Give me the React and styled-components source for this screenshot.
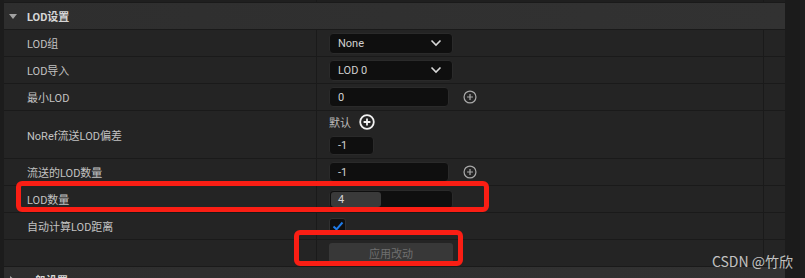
import React from 'react';
import styled, { createGlobalStyle } from 'styled-components';

const GlobalStyle = createGlobalStyle`
  html, body {
    margin: 0;
    padding: 0;
    background: #1b1b1b;
    overflow: hidden;
  }
  * { box-sizing: border-box; }
`;

const Page = styled.div`
  position: relative;
  display: flex;
  width: 805px;
  height: 278px;
  overflow: hidden;
  background: #1b1b1b;
  font-family: Roboto, "Noto Sans CJK SC", sans-serif;
  font-size: 11px;
  color: #c4c4c4;
`;

const LeftEdge = styled.div`
  width: 4px;
  background: #1c1c1c;
`;

const Panel = styled.div`
  width: 781px;
  display: flex;
  flex-direction: column;
`;

const Gutter = styled.div`
  flex: 1;
  display: flex;
  justify-content: flex-end;
  background: #1b1b1b;
  div {
    width: 5px;
    background: #1f1f1f;
  }
`;

const Row = styled.div`
  display: grid;
  grid-template-columns: 313px 447px 1fr;
  height: ${p => p.$h || 27}px;
  flex-shrink: 0;
  background: ${p => p.$dim ? '#1f1f1f' : '#242424'};
  border-bottom: 1px solid #1a1a1a;
`;

const NameCell = styled.div`
  display: flex;
  align-items: center;
  padding-left: 23px;
  border-right: 1px solid #1a1a1a;
`;

const ValueCell = styled.div`
  display: flex;
  flex-direction: ${p => p.$stack ? 'column' : 'row'};
  align-items: ${p => p.$stack ? 'flex-start' : 'center'};
  justify-content: ${p => p.$stack ? 'center' : 'flex-start'};
  gap: ${p => p.$stack ? 6 : 14}px;
  padding-left: 12px;
  border-right: 1px solid #1a1a1a;
`;

const ExtraCell = styled.div``;

const SectionHeader = styled.div`
  display: flex;
  align-items: center;
  height: 27px;
  flex-shrink: 0;
  padding-left: 5px;
  gap: 10px;
  background: linear-gradient(90deg, #2e2e2e, #323232);
  border-bottom: 1px solid #1a1a1a;
`;

const Caret = styled.span`
  width: 0;
  height: 0;
  ${p => p.$open
    ? `border-left: 4px solid transparent;
       border-right: 4px solid transparent;
       border-top: 5px solid #a2a2a2;`
    : `border-top: 4px solid transparent;
       border-bottom: 4px solid transparent;
       border-left: 5px solid #a2a2a2;
       margin-left: 1px; margin-right: -1px;`}
`;

const SectionTitle = styled.span`
  font-weight: 700;
  color: #d6d6d6;
`;

const Label = styled.span`
  color: #c2c2c2;
`;

const Dropdown = styled.div`
  display: flex;
  align-items: center;
  justify-content: space-between;
  width: 124px;
  height: 21px;
  padding: 0 10px 0 8px;
  background: #0f0f0f;
  border: 1px solid #2a2a2a;
  border-radius: 4px;
  color: #cfcfcf;
`;

const NumberBox = styled.div`
  position: relative;
  display: flex;
  align-items: center;
  width: ${p => p.$w || 120}px;
  height: ${p => p.$hgt || 20}px;
  padding-left: 8px;
  background: #0f0f0f;
  border: 1px solid #2a2a2a;
  border-radius: 4px;
  color: #d4d4d4;
  overflow: hidden;
`;

const SliderFill = styled.div`
  position: absolute;
  left: 1px;
  top: 1px;
  bottom: 1px;
  border-radius: 3px;
  background: #3a3a3a;
`;

const BoxText = styled.span`
  position: relative;
`;

const DefaultLine = styled.div`
  display: flex;
  align-items: center;
  gap: 8px;
  color: #bdbdbd;
`;

const CheckBox = styled.div`
  display: flex;
  align-items: center;
  justify-content: center;
  width: 17px;
  height: 17px;
  background: #0f0f0f;
  border: 1px solid #303030;
  border-radius: 3px;
`;

const ApplyButton = styled.div`
  display: flex;
  align-items: center;
  justify-content: center;
  width: 124px;
  height: 20px;
  background: #383838;
  border-radius: 3px;
  color: #6f6f6f;
`;

const Highlight = styled.div`
  position: absolute;
  left: ${p => p.$x}px;
  top: ${p => p.$y}px;
  width: ${p => p.$w}px;
  height: ${p => p.$h}px;
  border: 5px solid #fa1e14;
  border-radius: 6px;
  pointer-events: none;
`;

const Watermark = styled.div`
  position: absolute;
  right: 12px;
  bottom: 9px;
  font-family: "Noto Sans CJK SC", sans-serif;
  font-size: 14px;
  line-height: 16px;
  color: rgba(225, 225, 225, 0.85);
`;

const Chevron = () => (
  <svg width="12" height="8" viewBox="0 0 12 8">
    <path d="M1.5 1.5 L6 6 L10.5 1.5" fill="none" stroke="#d8d8d8" strokeWidth="1.6" />
  </svg>
);

const PlusIcon = ({ bright }) => (
  <svg width={bright ? 16 : 14} height={bright ? 16 : 14} viewBox="0 0 16 16">
    <circle cx="8" cy="8" r="6.8" fill="none" stroke={bright ? '#f2f2f2' : '#a8a8a8'} strokeWidth={bright ? 1.8 : 1.4} />
    <path d="M8 4.6 V11.4 M4.6 8 H11.4" stroke={bright ? '#f2f2f2' : '#a8a8a8'} strokeWidth={bright ? 1.8 : 1.4} />
  </svg>
);

const Check = () => (
  <svg width="12" height="10" viewBox="0 0 12 10">
    <path d="M1.5 5.5 L4.5 8.3 L10.5 1.5" fill="none" stroke="#1f7be8" strokeWidth="2" />
  </svg>
);

const rows = [
  { label: 'LOD组', kind: 'dropdown', value: 'None' },
  { label: 'LOD导入', kind: 'dropdown', value: 'LOD 0' },
  { label: '最小LOD', kind: 'number', value: '0', plus: true },
  { label: 'NoRef流送LOD偏差', kind: 'default', value: '-1', h: 48 },
  { label: '流送的LOD数量', kind: 'number', value: '-1', plus: true },
  { label: 'LOD数量', kind: 'slider', value: '4' },
  { label: '自动计算LOD距离', kind: 'check' },
  { label: '', kind: 'button', value: '应用改动' },
];

function renderValue(r) {
  switch (r.kind) {
    case 'dropdown':
      return <Dropdown>{r.value}<Chevron /></Dropdown>;
    case 'number':
      return (
        <>
          <NumberBox $hgt={20}><BoxText>{r.value}</BoxText></NumberBox>
          {r.plus && <PlusIcon />}
        </>
      );
    case 'default':
      return (
        <>
          <DefaultLine>默认<PlusIcon bright /></DefaultLine>
          <NumberBox $w={45} $hgt={19}><BoxText>{r.value}</BoxText></NumberBox>
        </>
      );
    case 'slider':
      return (
        <NumberBox $w={124} $hgt={19}>
          <SliderFill style={{ width: 50 }} />
          <BoxText>{r.value}</BoxText>
        </NumberBox>
      );
    case 'check':
      return <CheckBox><Check /></CheckBox>;
    case 'button':
      return <ApplyButton>{r.value}</ApplyButton>;
    default:
      return null;
  }
}

export default function App() {
  return (
    <>
      <GlobalStyle />
      <Page>
        <LeftEdge />
        <Panel>
          <Row $h={3} $dim><NameCell /><ValueCell /><ExtraCell /></Row>
          <SectionHeader>
            <Caret $open />
            <SectionTitle>LOD设置</SectionTitle>
          </SectionHeader>
          {rows.map((r, i) => (
            <Row key={i} $h={r.h}>
              <NameCell><Label>{r.label}</Label></NameCell>
              <ValueCell $stack={r.kind === 'default'}>{renderValue(r)}</ValueCell>
              <ExtraCell />
            </Row>
          ))}
          <SectionHeader>
            <Caret />
            <SectionTitle>一般设置</SectionTitle>
          </SectionHeader>
        </Panel>
        <Gutter><div /></Gutter>
        <Highlight $x={16} $y={181} $w={473} $h={31} />
        <Highlight $x={294} $y={230} $w={169} $h={36} />
        <Watermark>CSDN @竹欣</Watermark>
      </Page>
    </>
  );
}
